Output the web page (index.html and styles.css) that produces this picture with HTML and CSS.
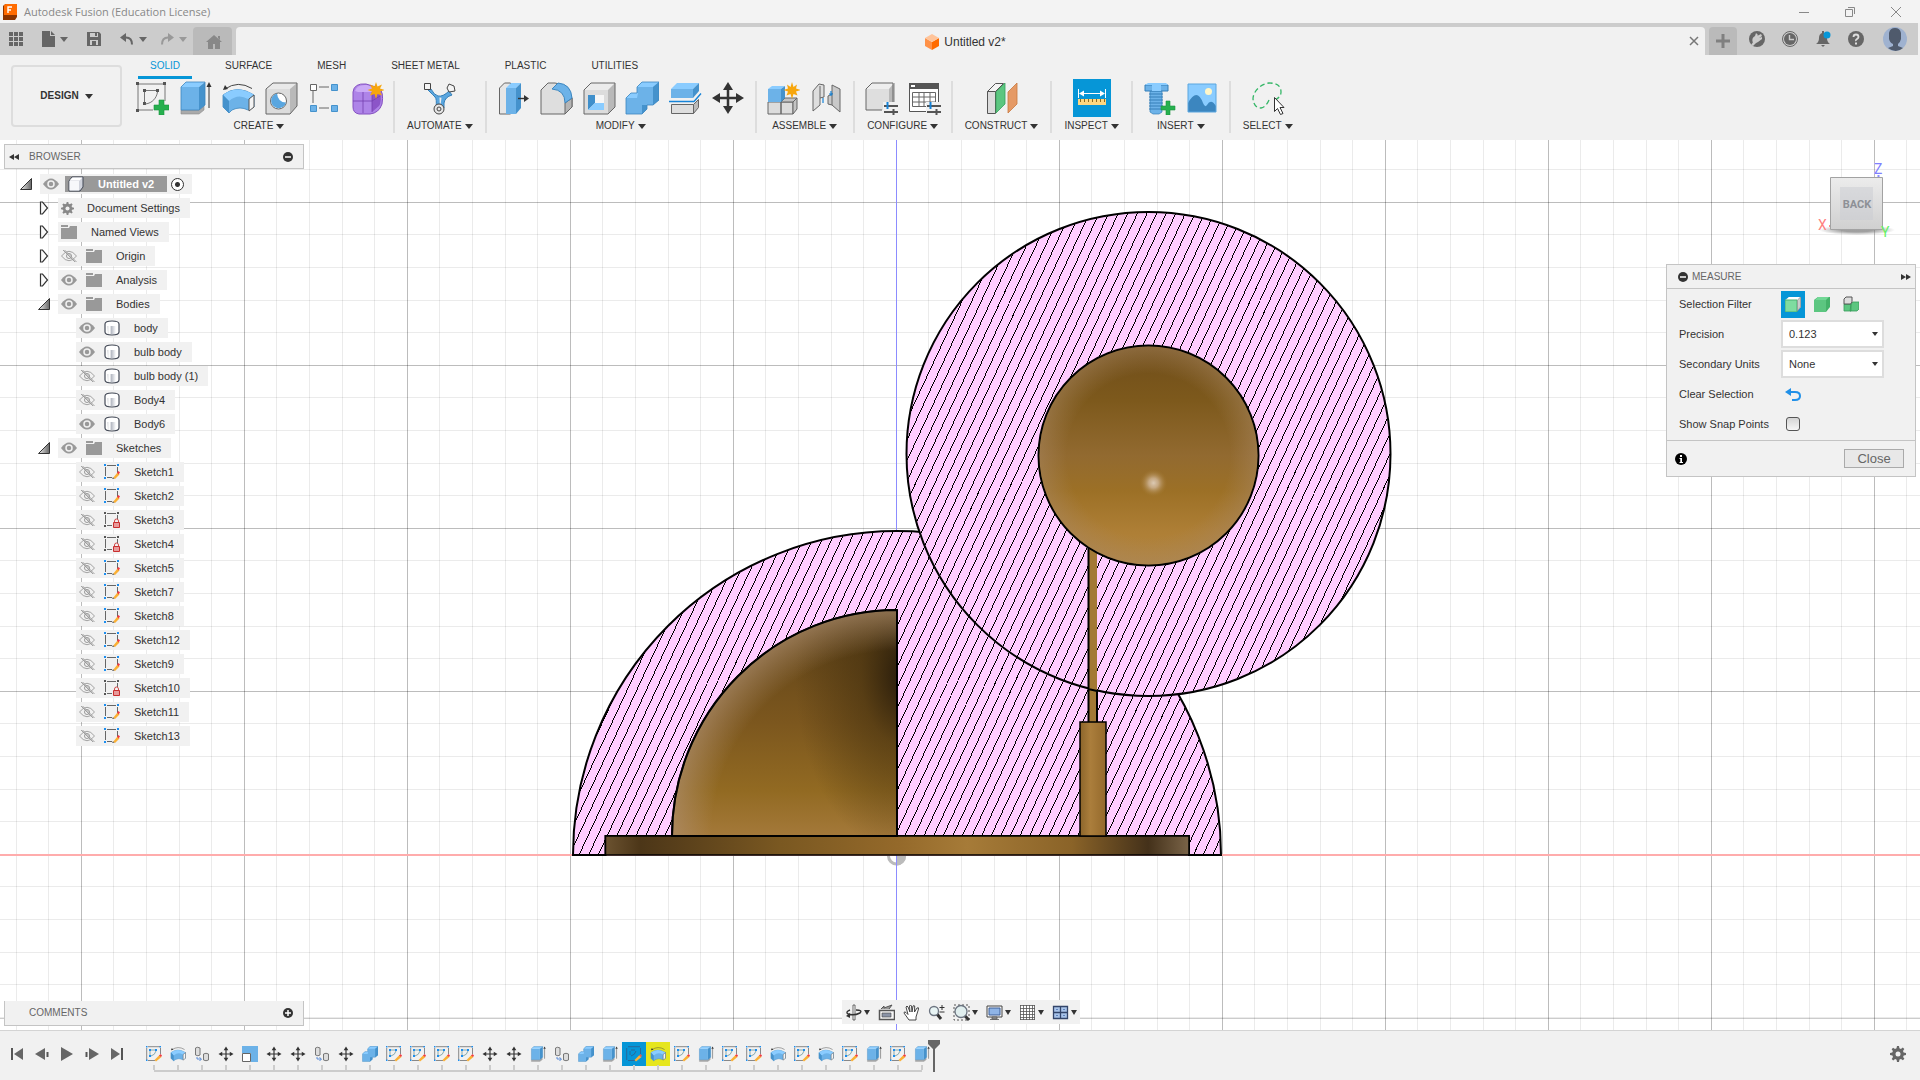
FILE: index.html
```html
<!DOCTYPE html>
<html lang="en">
<head>
<meta charset="utf-8">
<title>Autodesk Fusion (Education License)</title>
<link rel="stylesheet" href="styles.css">
</head>
<body>
<svg class="defs" width="0" height="0" aria-hidden="true">
  <defs>
    <linearGradient id="twistyFill" x1="0" y1="0" x2="1" y2="0"><stop offset="0" stop-color="#eee"/><stop offset="1" stop-color="#666"/></linearGradient>
    <linearGradient id="cylFill" x1="0" y1="0" x2="1" y2="0"><stop offset="0" stop-color="#d8dade"/><stop offset=".3" stop-color="#fff"/><stop offset=".5" stop-color="#b9bdc6"/><stop offset="1" stop-color="#fff"/></linearGradient>
  </defs>
  <symbol id="i-sketch" viewBox="0 0 34 34">
    <path d="M3 4v24M4 3h24M30 4v16M4 29h14" fill="none" stroke="#777"/>
    <path d="M1 1h3v3H1zM28 1h3v3h-3zM1 28h3v3H1zM8 8h3v3H8zM21 8h3v3h-3zM8 21h3v3H8z" fill="#555"/>
    <path d="M9.500 11v10M11 9.500h10M22.500 11c-1 6-5 11-12 12" fill="none" stroke="#777"/>
    <path d="M24 19h5v5h5v5h-5v5h-5v-5h-5v-5h5z" fill="#26b04e" stroke="#1c9440" stroke-width=".6"/>
  </symbol>
  <symbol id="i-extrude" viewBox="0 0 34 34">
    <path d="M3 29h18l5-4v4l-5 4H3z" fill="#aaa" stroke="#8a8a8a" stroke-width=".6"/>
    <path d="M3 6h18v23H3z" fill="#6cb2e8"/><path d="M3 6l5-5h19l-6 5z" fill="#8accff"/><path d="M21 6l6-5v23l-6 5z" fill="#4592cc"/>
    <path d="M3 6l5-5h19v23l-6 5H3z" fill="none" stroke="#3c86bf" stroke-width=".8"/>
    <path d="M31 5v22" stroke="#333"/><path d="M31 1l2.500 5h-5z" fill="#333"/>
  </symbol>
  <symbol id="i-revolve" viewBox="0 0 34 34">
    <path d="M2 14q14-11 31 0v12l-6 3q-8-4-16 0l-3 3-6-6z" fill="#6cb2e8" stroke="#3c86bf" stroke-width=".8"/>
    <path d="M2 14q14-11 31 0l-6 4q-10-6-19 2z" fill="#8accff"/><path d="M2 14l6 6v12l-6-6z" fill="#4592cc"/>
    <path d="M33 14v12l-5 4V18z" fill="#f4f4f4" stroke="#555"/>
    <path d="M4 8q13-9 27-.5" fill="none" stroke="#444"/><path d="M2 9l2-5 3 4z" fill="#333"/>
  </symbol>
  <symbol id="i-hole" viewBox="0 0 34 34">
    <path d="M2 8l7-6h24v23l-7 8H2z" fill="#b9b9b9"/><path d="M2 8l7-6h24l-7 6z" fill="#e9e9e9"/><path d="M2 8h24v25H2z" fill="#dcdcdc"/>
    <path d="M2 8l7-6h24v23l-7 8H2z" fill="none" stroke="#666"/>
    <circle cx="14.500" cy="20" r="8" fill="#fff" stroke="#666"/><path d="M13 12.500a7.500 7.500 0 1 0 9 9q-8 0-9-9z" fill="#5aa6df"/>
  </symbol>
  <symbol id="i-pattern" viewBox="0 0 34 34">
    <path d="M12 6h10M12 27h10M6 10v12" stroke="#666" fill="none"/>
    <path d="M3.500 3.500h6v6h-6z" fill="#fff" stroke="#666"/><path d="M24.500 3.500h6v6h-6zM24.500 24.500h6v6h-6zM3.500 24.500h6v6h-6z" fill="#6cb2e8" stroke="#4592cc"/>
  </symbol>
  <symbol id="i-form" viewBox="0 0 34 34">
    <path d="M3 11q1-9 13-8l13 4q5 4 3 16-3 9-12 10H9q-6-1-6-7z" fill="#ae84e8" stroke="#8450c0"/>
    <path d="M5 10q2-7 12-6l10 4-5 3H8z" fill="#cbaaf6"/><path d="M22 12l8-3q2 12-1 16l-7 6z" fill="#8c55c8"/>
    <path d="M13 11v21M3 20h19l8-5M22 11v20" fill="none" stroke="#7440ae" stroke-width=".8"/>
    <path d="M26 1l1.500 4.500L32 3.500l-2 4 5 1.500-5 1.500 2 4-4.500-1.500L26 18l-1.500-5L20 14.500l2-4L17.500 9l4.500-1.500-2-4 4.500 2z" fill="#f7a60c"/>
  </symbol>
  <symbol id="i-automate" viewBox="0 0 34 34">
    <path d="M8 8q3 6 7 7 5 1 11-5l3 4q-7 2-8 8v5l-8-1q1-8-1-10T5 9z" fill="#5aa6df" stroke="#357fb8"/>
    <path d="M16.500 16.500l2 .2-.8 6h-1z" fill="#eee"/>
    <path d="M1.500 2.500h6v6h-6z" fill="#f4f4f4" stroke="#444"/><path d="M26 3l5 2 1 5-6 1-2-4z" fill="#f4f4f4" stroke="#444"/>
    <circle cx="16" cy="28" r="5" fill="#e6e6e6" stroke="#444"/><circle cx="16" cy="28" r="2" fill="none" stroke="#444"/>
  </symbol>
  <symbol id="i-press" viewBox="0 0 34 34">
    <path d="M3.500 7l5-5h6v31h-11z" fill="#e6e6e6" stroke="#666"/>
    <path d="M10 7h10v26H10z" fill="#6cb2e8"/><path d="M10 7l5-5h10l-5 5z" fill="#8accff"/><path d="M20 7l5-5v25l-5 6z" fill="#4592cc"/>
    <path d="M22 17.500h8" stroke="#333" stroke-width="1.400"/><path d="M28 14l5 3.500-5 3.500z" fill="#333"/>
  </symbol>
  <symbol id="i-fillet" viewBox="0 0 34 34">
    <path d="M2 9l7-7h7q10 1 13 10l4 5v9l-7 7H2z" fill="#dedede" stroke="#666"/><path d="M26 22l7-5v9l-7 7z" fill="#b5b5b5" stroke="#666"/>
    <path d="M13 8l6-6q13 1 14 15l-7 5Q26 9 13 8z" fill="#6cb2e8" stroke="#3c86bf"/>
  </symbol>
  <symbol id="i-shell" viewBox="0 0 34 34">
    <path d="M2 9l7-7h24v24l-7 7H2z" fill="#b9b9b9"/><path d="M2 9l7-7h24l-7 7z" fill="#ececec"/><path d="M2 9h24v24H2z" fill="#dcdcdc"/>
    <path d="M2 9l7-7h24v24l-7 7H2z" fill="none" stroke="#666"/>
    <path d="M6 14h16v15H6z" fill="#f6f6f6"/><path d="M6 14h7v8l-7 7z" fill="#3f8fcb"/><path d="M6 29l7-7h9v7z" fill="#8accff"/>
  </symbol>
  <symbol id="i-combine" viewBox="0 0 34 34">
    <path d="M1 17l5-5h6V6l5-5h17v18l-6 5h-6v4l-5 5H1z" fill="#6cb2e8"/><path d="M12 6l5-5h17l-6 5zM1 17l5-5h7l-1 5z" fill="#8accff"/><path d="M28 6l6-5v18l-6 5zM17 24h5v4l-5 5z" fill="#4592cc"/>
    <path d="M1 17l5-5h6V6l5-5h17v18l-6 5h-6v4l-5 5H1z" fill="none" stroke="#3c86bf" stroke-width=".8"/>
  </symbol>
  <symbol id="i-split" viewBox="0 0 34 34">
    <path d="M3 8h22v9H3z" fill="#6cb2e8"/><path d="M3 8l6-6h22l-6 6z" fill="#8accff"/><path d="M25 8l6-6v8l-6 7z" fill="#4592cc"/>
    <path d="M3.500 23.500h22v9h-22z" fill="#dedede" stroke="#666"/><path d="M25.500 23.500l5-5v8l-5 6z" fill="#bbb" stroke="#666"/>
    <path d="M1 20.500h25l7-8" fill="none" stroke="#1583d8" stroke-width="1.400"/>
  </symbol>
  <symbol id="i-move" viewBox="0 0 34 34">
    <path d="M17 6v22M6 17h22" stroke="#333" stroke-width="2.500"/><path d="M17 1l5 8H12zM17 33l5-8H12zM1 17l8-5v10zM33 17l-8-5v10z" fill="#333"/>
  </symbol>
  <symbol id="i-component" viewBox="0 0 34 34">
    <path d="M2 21h13v12H2zM15 21h12v12H15z" fill="#dcdcdc" stroke="#666"/><path d="M15 21l4-4h12l-4 4zM27 21l4-4v11l-4 5z" fill="#c4c4c4" stroke="#666"/>
    <path d="M2 8h13v13H2z" fill="#6cb2e8"/><path d="M2 8l4-3h13l-4 3z" fill="#8accff"/><path d="M15 8l4-3v12l-4 4z" fill="#4592cc"/>
    <path d="M26 1l1.500 5L31 3.500l-1 4 5 1.500-5 1.500 1.500 4-4-1.500L26 18l-1.500-5-4 1.500 1.500-4L17.500 9l4.500-1.500-1-4 3.500 2.500z" fill="#f7a60c"/>
  </symbol>
  <symbol id="i-joint" viewBox="0 0 34 34">
    <path d="M4 10l6-7 5 1v12l-4 1v7l-7 6z" fill="#dedede" stroke="#666"/><path d="M11 5v12" stroke="#666"/>
    <path d="M31 8l-8-4v9l-4 2v8l4 1 8 7z" fill="#c9c9c9" stroke="#666"/><path d="M23 12v12" stroke="#666"/>
    <path d="M14 17v5M22 10v5M20 13h4" stroke="#1583d8" stroke-width="1.200"/>
  </symbol>
  <symbol id="i-config" viewBox="0 0 34 34">
    <path d="M2 8l6-6h23v20l-6 7H2z" fill="#b9b9b9"/><path d="M2 8l6-6h22l-5 6z" fill="#eee"/><path d="M2 8h23v21H2z" fill="#dedede"/>
    <path d="M18 29H2V8l6-6h21v20" fill="none" stroke="#666"/>
    <path d="M19 21h15v12H19z" fill="#f1f1f1"/><path d="M20 25h14M20 31h14" stroke="#555" stroke-width="2"/><path d="M23.500 21v7" stroke="#1583d8" stroke-width="2"/><path d="M29.500 28v6" stroke="#555" stroke-width="2"/>
  </symbol>
  <symbol id="i-table" viewBox="0 0 34 34">
    <path d="M2.500 2.500h29v28h-29z" fill="#fff" stroke="#555"/><path d="M2 2h30v6H2z" fill="#555"/><path d="M4 4h4v2H4z" fill="#fff"/>
    <path d="M5.500 11.500h23v14h-23zM5 16h24M5 21h24M12 11v15M17 11v15M23 11v15" fill="none" stroke="#666"/>
    <path d="M19 21h15v13H19z" fill="#f1f1f1"/><path d="M20 25h14M20 31h14" stroke="#555" stroke-width="2"/><path d="M23.500 21v7" stroke="#1583d8" stroke-width="2"/><path d="M29.500 28v6" stroke="#555" stroke-width="2"/>
  </symbol>
  <symbol id="i-construct" viewBox="0 0 34 34">
    <path d="M2.500 10.500l8-8h8l-8 8z" fill="#f4f4f4" stroke="#555"/><path d="M2.500 10.500h8v22h-8z" fill="#dcdcdc" stroke="#555"/>
    <path d="M11 11l9-9v21l-9 9z" fill="#5cc680" stroke="#36a25c" stroke-width=".8"/><path d="M23 11l9-9v21l-9 9z" fill="#e59a66" stroke="#c9783f" stroke-width=".8"/>
  </symbol>
  <symbol id="i-inspect" viewBox="0 0 34 34">
    <path d="M3.500 8v9M30.500 8v9M5 12.500h24" stroke="#fff" fill="none"/><path d="M4 12.500l5-3v6zM30 12.500l-5-3v6z" fill="#fff"/>
    <path d="M3 18h28v6H3z" fill="#ffd780"/><path d="M5.500 18v3M9.500 18v3M13.500 18v3M17.500 18v3M21.500 18v3M25.500 18v3M29.500 18v3" stroke="#8b6a20"/>
  </symbol>
  <symbol id="i-insert" viewBox="0 0 34 34">
    <path d="M8 10h12v21l-3 2h-6l-3-2z" fill="#6cb2e8" stroke="#357fb8" stroke-width=".7"/><path d="M7 13h14M7 16h14M7 19h14M7 22h14M7 25h14M7 28h14" stroke="#357fb8"/>
    <path d="M3 4h23v6H3z" fill="#6cb2e8" stroke="#357fb8"/><path d="M3 4l3-2h18l2 2z" fill="#8accff"/><path d="M10 4h9v6h-9z" fill="#8accff"/>
    <path d="M24 20h4v5h5v4h-5v5h-4v-5h-5v-4h5z" fill="#26b04e" stroke="#1c9440" stroke-width=".6"/>
  </symbol>
  <symbol id="i-image" viewBox="0 0 34 34">
    <path d="M3 3h28v28H3z" fill="#8accff"/><path d="M3 22q9-16 15 0 2 5 4 2 4-7 9 1v6H3z" fill="#3c86bf"/><circle cx="23.500" cy="10.500" r="3.500" fill="#fff6c8"/><path d="M3 3h28v28H3z" fill="none" stroke="#5aa6df"/>
  </symbol>
  <symbol id="i-select" viewBox="0 0 34 34">
    <path d="M24 19q6-3 6-8 0-9-12-9C9 3 2 11 2 18q1 9 8 9 5-1 8-8" fill="none" stroke="#33b666" stroke-width="1.300" stroke-dasharray="5 3"/>
    <path d="M23.500 16.500v14l3-3 3 6 2.500-1-3-6h4z" fill="#fff" stroke="#333"/>
  </symbol>

  <symbol id="i-eye" viewBox="0 0 16 12"><path d="M0 6q8-11 16 0-8 11-16 0z" fill="#999"/><circle cx="8" cy="6" r="3" fill="#999" stroke="#f1f1f1" stroke-width="1.500"/></symbol>
  <symbol id="i-eyeoff" viewBox="0 0 16 12"><path d="M.5 6q7.500-9.500 15 0-7.500 9.500-15 0zM2 0l12 12M3.500 0l12 12" fill="none" stroke="#999" stroke-width=".9"/><circle cx="8" cy="6" r="2.500" fill="none" stroke="#999"/></symbol>
  <symbol id="i-folder" viewBox="0 0 16 14"><path d="M0 0h7v2H0zM0 3h8l1-2h7v13H0z" fill="#999"/></symbol>
  <symbol id="i-body" viewBox="0 0 16 16"><path d="M1 4q0-3 7-3t7 3v8q0 3-7 3t-7-3z" fill="#fff" stroke="#434956" stroke-width="1.200"/><path d="M3 6h9v8H4z" fill="url(#cylFill)"/></symbol>
  <symbol id="i-cube" viewBox="0 0 16 16"><path d="M1 5l3-4h11v10l-3 4H1z" fill="#d0d3dc" stroke="#434956"/><path d="M1.500 5H11v9.500H1.500z" fill="#f7f8fb"/><path d="M1.500 4.500l3-3h10l-3 3z" fill="#fff"/></symbol>
  <symbol id="i-sk" viewBox="0 0 16 16"><path d="M3 1.500h9M1.500 3v9M13.500 3v6M3 13.500h5" fill="none" stroke="#666"/><path d="M0 0h2v2H0zM13 0h2v2h-2zM0 13h2v2H0z" fill="#1c8ef0"/><path d="M9 14l4.500-5.500 2 2L11 15z" fill="#fbb034"/><path d="M13 8.500L14.500 7l1.500 1.500-1.500 2z" fill="#f03c46"/><path d="M8 15l1-2 1.500 2z" fill="#777"/></symbol>
  <symbol id="i-sklock" viewBox="0 0 16 16"><path d="M3 1.500h9M1.500 3v9M13.500 3v4M3 13.500h5" fill="none" stroke="#666"/><path d="M0 0h2v2H0zM13 0h2v2h-2zM0 13h2v2H0z" fill="#555"/><path d="M10.500 10V9a2 2 0 0 1 4 0v1" fill="none" stroke="#d04848"/><path d="M9.500 10.500h6v5h-6z" fill="#e89a9a" stroke="#c92f2f"/></symbol>
  <symbol id="i-gear" viewBox="0 0 16 16"><path d="M7 0h2l.4 2.300 1.500.6L12.800 1.600l1.500 1.500-1.300 1.900.6 1.500L16 7v2l-2.300.4-.6 1.500 1.300 1.900-1.500 1.500-1.900-1.300-1.500.6L9 16H7l-.4-2.300-1.500-.6-1.900 1.300-1.500-1.500 1.300-1.900-.6-1.500L0 9V7l2.300-.4.6-1.500-1.300-1.900 1.500-1.500L5 2.900l1.500-.6z" fill="currentColor"/><circle cx="8" cy="8" r="2.500" fill="#f1f1f1"/></symbol>
  <symbol id="i-open" viewBox="0 0 12 12"><path d="M11.500.5v11H.5z" fill="url(#twistyFill)" stroke="#333"/></symbol>
  <symbol id="i-shut" viewBox="0 0 12 14"><path d="M2.500 1h2l5 6-5 6h-2z" fill="#fafafa" stroke="#333" stroke-width="1.200"/></symbol>

  <symbol id="t-sketch" viewBox="0 0 16 16"><path d="M2 .7h12M.7 2v12M14.500 2v6M2 14.500h7" fill="none" stroke="#888"/><path d="M0 0h1.500v1.500H0zM13.500 0H15v1.500h-1.500zM0 13.500h1.500V15H0zM3 3h2v2H3zM9 3h2v2H9zM3 9h2v2H3z" fill="#1c8ef0"/><path d="M5 4h4M4 5v4M10 5q-1 4-5 5" fill="none" stroke="#8aa"/><path d="M8.500 14l5-5 2 2L10 15.500z" fill="#fbb034"/><path d="M13 9.500L14.500 8 16 9.500 15 11z" fill="#f03c46"/></symbol>
  <symbol id="t-sketch-on" viewBox="0 0 16 16"><path d="M2 .7h12M.7 2v12M14.500 2v6M2 14.500h7M5 4h4M4 5v4M10 5q-1 4-5 5" fill="none" stroke="#28699a"/><path d="M8.500 14l5-5 2 2L10 15.500z" fill="#fbb034"/><path d="M13 9.500L14.500 8 16 9.500 15 11z" fill="#d5605a"/></symbol>
  <symbol id="t-copy" viewBox="0 0 16 16"><path d="M1.500 2q2-1.500 4.500 0v7q-2 1.500-4.500 0zM9.500 8q2.500-1.500 5 0v6q-2.500 1.500-5 0z" fill="#ddd" stroke="#777"/><path d="M3 11v2h4M5.500 11.500L7.500 13l-2 2" fill="none" stroke="#5a8cd8"/></symbol>
  <symbol id="t-scale" viewBox="0 0 16 16"><path d="M0 0h16v16H9V7H0z" fill="#6cb2e8"/><path d="M.5 7.500h8v8h-8z" fill="#fff" stroke="#666"/></symbol>
</svg>

<header class="titlebar">
  <svg class="logo" width="14" height="16" viewBox="0 0 14 16"><path d="M1 1l2-1h11v13l-2 3H0V2z" fill="#8a3400"/><path d="M1 1l2-1h11v11H1z" fill="#ff6b00"/><path d="M5 9V3h4M5 6h3" fill="none" stroke="#fff" stroke-width="1.400"/></svg>
  <span class="app-name">Autodesk Fusion (Education License)</span>
  <div class="window-controls">
    <button aria-label="Minimize"><svg width="12" height="12"><path d="M1 6.500h10" stroke="#888"/></svg></button>
    <button aria-label="Restore"><svg width="12" height="12"><path d="M1.500 3.500h7v7h-7zM4 1.500h6.500V8" fill="none" stroke="#888"/></svg></button>
    <button aria-label="Close window"><svg width="12" height="12"><path d="M1 1l10 10M11 1L1 11" stroke="#888"/></svg></button>
  </div>
</header>

<nav class="tabbar" aria-label="Documents">
  <div class="quick">
    <button class="q-grid" aria-label="Data panel"><svg width="14" height="14" viewBox="0 0 14 14"><path d="M0 0h4v4H0zM5 0h4v4H5zM10 0h4v4h-4zM0 5h4v4H0zM5 5h4v4H5zM10 5h4v4h-4zM0 10h4v4H0zM5 10h4v4H5zM10 10h4v4h-4z" fill="#666"/></svg></button>
    <button class="q-file" aria-label="File"><svg width="13" height="16" viewBox="0 0 13 16"><path d="M0 0h8v5h5v11H0z" fill="#666"/><path d="M9 0l4 4H9z" fill="#666"/></svg><i class="caret"></i></button>
    <button class="q-save" aria-label="Save"><svg width="14" height="14" viewBox="0 0 14 14"><path d="M0 0h12l2 2v12H0z" fill="#666"/><path d="M3 1h8v4H3zM3 8h8v5H3z" fill="#ccc"/><path d="M8 1h2v3H8zM5 9h4v4H5z" fill="#666"/></svg></button>
    <button class="q-undo" aria-label="Undo"><svg width="14" height="12" viewBox="0 0 14 12"><path d="M2 4.500h4q6 0 6 7" fill="none" stroke="#666" stroke-width="2"/><path d="M0 4.500L6 0v9z" fill="#666"/></svg><i class="caret"></i></button>
    <button class="q-redo" aria-label="Redo"><svg width="14" height="12" viewBox="0 0 14 12"><path d="M12 4.500H8q-6 0-6 7" fill="none" stroke="#999" stroke-width="2"/><path d="M14 4.500L8 0v9z" fill="#999"/></svg><i class="caret"></i></button>
  </div>
  <button class="home-tab" aria-label="Home"><svg width="16" height="14" viewBox="0 0 16 14"><path d="M0 7l8-7 8 7h-2v7H9V9H7v5H2V7zM12 1h2v4l-2-2z" fill="#888"/></svg></button>
  <div class="doc-tab">
    <span class="doc-label"><svg width="14" height="16" viewBox="0 0 14 16"><path d="M0 4l7 4v8l-7-4z" fill="#ff9248"/><path d="M14 4L7 8v8l7-4z" fill="#ff6b00"/><path d="M7 0l7 4-7 4-7-4z" fill="#ffc49a"/></svg>Untitled v2*</span>
    <button aria-label="Close document"><svg width="10" height="10"><path d="M1 1l8 8M9 1L1 9" stroke="#777" stroke-width="1.500"/></svg></button>
  </div>
  <button class="new-tab" aria-label="New design"><svg width="14" height="14"><path d="M7 0v14M0 7h14" stroke="#808080" stroke-width="3"/></svg></button>
  <div class="account">
    <button aria-label="Extensions"><svg width="16" height="16" viewBox="0 0 16 16"><circle cx="8" cy="8" r="8" fill="#666"/><path d="M4 12q-2-5 2-7l1-3 2 2-1 1 4-2 1 2-3 2 3-1v2l-4 3q-3 2-5 1" fill="#ccc"/><path d="M2 14l3-4 2 2-3 3z" fill="#ccc"/></svg></button>
    <button aria-label="Job status"><svg width="16" height="16" viewBox="0 0 16 16"><circle cx="8" cy="8" r="7.500" fill="none" stroke="#666"/><circle cx="8" cy="8" r="6" fill="#666"/><path d="M7.500 4v4.500H12" fill="none" stroke="#ccc" stroke-width="1.400"/></svg></button>
    <button aria-label="Notifications"><svg width="16" height="16" viewBox="0 0 16 16"><path d="M1 13q3-2 3-6 0-4 3-5V0h2v2q3 1 3 5 0 4 3 6zM6 14h4l-2 2z" fill="#666"/><circle cx="12" cy="4" r="3.500" fill="#0696d7"/></svg></button>
    <button aria-label="Help"><svg width="16" height="16" viewBox="0 0 16 16"><circle cx="8" cy="8" r="8" fill="#666"/><path d="M5.500 6q0-2.500 2.500-2.500T10.500 6Q10.500 7 9 8t-1 2" fill="none" stroke="#ddd" stroke-width="1.800"/><path d="M7 11.500h2v2H7z" fill="#ddd"/></svg></button>
    <button class="avatar" aria-label="Account"><svg width="24" height="24" viewBox="0 0 24 24"><circle cx="12" cy="12" r="12" fill="#9fb2d0"/><path d="M6 6q1-5 6-5t6 5v6q-1 4-3 5v2l5 2q-7 6-15 0l5-2v-2q-3-1-4-5z" fill="#4f5a6c"/></svg></button>
  </div>
</nav>

<section class="ribbon">
  <button class="workspace">DESIGN<i class="caret"></i></button>
  <div class="ribbon-main">
    <div class="tabs">
      <button class="active">SOLID</button><button>SURFACE</button><button>MESH</button><button>SHEET METAL</button><button>PLASTIC</button><button>UTILITIES</button>
    </div>
    <div class="groups">
      <div class="group"><div class="tools">
        <button aria-label="Create Sketch"><svg><use href="#i-sketch"/></svg></button><button aria-label="Extrude"><svg><use href="#i-extrude"/></svg></button><button aria-label="Revolve"><svg><use href="#i-revolve"/></svg></button><button aria-label="Hole"><svg><use href="#i-hole"/></svg></button><button aria-label="Pattern"><svg><use href="#i-pattern"/></svg></button><button aria-label="Create Form"><svg><use href="#i-form"/></svg></button>
      </div><button class="menu">CREATE<i class="caret"></i></button></div>
      <div class="group"><div class="tools"><button aria-label="Automated Modeling"><svg><use href="#i-automate"/></svg></button></div><button class="menu">AUTOMATE<i class="caret"></i></button></div>
      <div class="group"><div class="tools">
        <button aria-label="Press Pull"><svg><use href="#i-press"/></svg></button><button aria-label="Fillet"><svg><use href="#i-fillet"/></svg></button><button aria-label="Shell"><svg><use href="#i-shell"/></svg></button><button aria-label="Combine"><svg><use href="#i-combine"/></svg></button><button aria-label="Split Body"><svg><use href="#i-split"/></svg></button><button aria-label="Move"><svg><use href="#i-move"/></svg></button>
      </div><button class="menu">MODIFY<i class="caret"></i></button></div>
      <div class="group"><div class="tools"><button aria-label="New Component"><svg><use href="#i-component"/></svg></button><button aria-label="Joint"><svg><use href="#i-joint"/></svg></button></div><button class="menu">ASSEMBLE<i class="caret"></i></button></div>
      <div class="group"><div class="tools"><button aria-label="Configure"><svg><use href="#i-config"/></svg></button><button aria-label="Configuration Table"><svg><use href="#i-table"/></svg></button></div><button class="menu">CONFIGURE<i class="caret"></i></button></div>
      <div class="group"><div class="tools"><button aria-label="Offset Plane"><svg><use href="#i-construct"/></svg></button></div><button class="menu">CONSTRUCT<i class="caret"></i></button></div>
      <div class="group"><div class="tools"><button class="on" aria-label="Measure"><svg><use href="#i-inspect"/></svg></button></div><button class="menu">INSPECT<i class="caret"></i></button></div>
      <div class="group"><div class="tools"><button aria-label="Insert Fastener"><svg><use href="#i-insert"/></svg></button><button aria-label="Canvas"><svg><use href="#i-image"/></svg></button></div><button class="menu">INSERT<i class="caret"></i></button></div>
      <div class="group"><div class="tools"><button aria-label="Select"><svg><use href="#i-select"/></svg></button></div><button class="menu">SELECT<i class="caret"></i></button></div>
    </div>
  </div>
</section>

<main class="viewport">
  <svg class="scene" viewBox="0 140 1920 890" preserveAspectRatio="xMidYMid slice" role="img" aria-label="Section view of the lamp model">
    <defs>
      <clipPath id="domeClip"><path d="M573 855a324 324 0 0 1 648 0h-32v-19H605.500v19z"/></clipPath>
      <clipPath id="ballClip"><circle cx="1148.500" cy="454" r="242"/></clipPath>
      <path id="hatchLines" d="M-1500 0H1500" transform="translate(897 836) skewX(-25)" stroke="#000" stroke-width="1800" stroke-dasharray="1 8.600" shape-rendering="crispEdges"/>
      <linearGradient id="ballBase" x1="0" y1="0" x2="0" y2="1"><stop offset="0" stop-color="#6f4d1a"/><stop offset=".25" stop-color="#7d591c"/><stop offset=".5" stop-color="#926a30"/><stop offset=".66" stop-color="#9c7026"/><stop offset=".85" stop-color="#ae7f36"/><stop offset="1" stop-color="#b38640"/></linearGradient>
      <radialGradient id="ballEdge"><stop offset=".75" stop-color="#a88660" stop-opacity="0"/><stop offset="1" stop-color="#a88660" stop-opacity=".5"/></radialGradient>
      <radialGradient id="spark"><stop offset="0" stop-color="#dccab4"/><stop offset=".35" stop-color="#cdb292" stop-opacity=".85"/><stop offset="1" stop-color="#a0752c" stop-opacity="0"/></radialGradient>
      <linearGradient id="domeBase" x1="0" y1="0" x2="0" y2="1"><stop offset="0" stop-color="#5c4118"/><stop offset=".5" stop-color="#7c571e"/><stop offset=".8" stop-color="#926a22"/><stop offset="1" stop-color="#a4793a"/></linearGradient>
      <radialGradient id="domeDark" gradientUnits="userSpaceOnUse" cx="0" cy="0" r="1" gradientTransform="translate(905 675) scale(110 180)"><stop offset="0" stop-color="#2a1c0a"/><stop offset=".12" stop-color="#2e200c" stop-opacity=".9"/><stop offset=".4" stop-color="#3c2a0c" stop-opacity=".5"/><stop offset="1" stop-color="#3c2a0c" stop-opacity="0"/></radialGradient>
      <radialGradient id="domeEdge" gradientUnits="userSpaceOnUse" cx="897" cy="836" r="226"><stop offset=".82" stop-color="#b09070" stop-opacity="0"/><stop offset="1" stop-color="#b09070" stop-opacity=".65"/></radialGradient>
      <linearGradient id="plate"><stop offset="0" stop-color="#6b5230"/><stop offset=".06" stop-color="#4c3618"/><stop offset=".3" stop-color="#7a5821"/><stop offset=".5" stop-color="#94692a"/><stop offset=".62" stop-color="#a67b38"/><stop offset=".8" stop-color="#8a6328"/><stop offset=".93" stop-color="#44311a"/><stop offset="1" stop-color="#7a6448"/></linearGradient>
      <linearGradient id="rod"><stop offset="0" stop-color="#8c652b"/><stop offset=".4" stop-color="#ab7e3c"/><stop offset="1" stop-color="#94692c"/></linearGradient>
    </defs>
    <g stroke="#000" shape-rendering="crispEdges">
      <path d="M-49.600 585H2000" stroke-opacity=".08" stroke-width="1200" stroke-dasharray="1 31.600"/>
      <path d="M960 6.200V1200" stroke-opacity=".08" stroke-width="2400" stroke-dasharray="1 31.600"/>
      <path d="M-82 585H2100" stroke-opacity=".2" stroke-width="1200" stroke-dasharray="1 162"/>
      <path d="M960 38.500V1200" stroke-opacity=".2" stroke-width="2400" stroke-dasharray="1 162.200"/>
    </g>
    <circle cx="896.500" cy="856" r="8" fill="#fff" stroke="#bbb" stroke-width="3"/><path d="M896.500 856h9.500a9.500 9.500 0 0 1-9.500 9.500z" fill="#bbb"/>
    <path d="M-500 855H2500" stroke="#ffacac" stroke-width="2"/>
    <path d="M896.500 0V1400" stroke="#8c8cff"/>
    <g stroke="#000" stroke-width="2">
      <path d="M573 855a324 324 0 0 1 648 0h-32v-19H605.500v19z" fill="#fcf" stroke="none"/>
      <g clip-path="url(#domeClip)"><use href="#hatchLines"/></g>
      <path d="M573 855a324 324 0 0 1 648 0h-32v-19H605.500v19z" fill="none"/>
      <path d="M605.500 836H1189v19H605.500z" fill="url(#plate)" stroke-width="1.500"/>
      <path d="M672 836a225 226 0 0 1 225-226v226z" fill="url(#domeBase)"/>
      <path d="M672 836a225 226 0 0 1 225-226v226z" fill="url(#domeDark)" stroke="none"/>
      <path d="M672 836a225 226 0 0 1 225-226v226z" fill="url(#domeEdge)"/>
      <circle cx="1148.500" cy="454" r="242" fill="#fcf" stroke="none"/>
      <g clip-path="url(#ballClip)"><use href="#hatchLines"/></g>
      <circle cx="1148.500" cy="454" r="242" fill="none"/>
      <path d="M1088 545h9v177h-9z" fill="#a37935" stroke="none"/>
      <path d="M1088.500 547v175M1097 690v32M1088 689q5 1 9 2"/>
      <path d="M1080 722h26v114h-26z" fill="url(#rod)" stroke-width="1.500"/>
      <circle cx="1148.500" cy="455.500" r="110" fill="url(#ballBase)"/>
      <circle cx="1148.500" cy="455.500" r="109" fill="url(#ballEdge)" stroke="none"/>
      <circle cx="1153.500" cy="483" r="14" fill="url(#spark)" stroke="none"/>
    </g>
  </svg>

  <section class="browser" aria-label="Browser">
    <header class="panel-head"><svg class="rewind" width="10" height="6"><path d="M5 0v6L0 3zM10 0v6L5 3z" fill="#333"/></svg><span>BROWSER</span><button aria-label="Collapse"><svg width="10" height="10"><circle cx="5" cy="5" r="5" fill="#333"/><path d="M2 5h6" stroke="#fff" stroke-width="1.500"/></svg></button></header>
    <ul class="tree">
      <li class="l0"><svg class="tw"><use href="#i-open"/></svg><div class="pill root"><svg class="eye"><use href="#i-eye"/></svg><span class="sel"><svg><use href="#i-cube"/></svg>Untitled v2</span><input type="radio" name="active" aria-label="Active component" checked></div></li>
      <li class="l1"><svg class="tw"><use href="#i-shut"/></svg><div class="pill one gear"><svg class="ic"><use href="#i-gear"/></svg><span>Document Settings</span></div></li>
      <li class="l1"><svg class="tw"><use href="#i-shut"/></svg><div class="pill one"><svg class="ic"><use href="#i-folder"/></svg><span>Named Views</span></div></li>
      <li class="l1"><svg class="tw"><use href="#i-shut"/></svg><div class="pill"><svg class="eye"><use href="#i-eyeoff"/></svg><svg class="ic"><use href="#i-folder"/></svg><span>Origin</span></div></li>
      <li class="l1"><svg class="tw"><use href="#i-shut"/></svg><div class="pill"><svg class="eye"><use href="#i-eye"/></svg><svg class="ic"><use href="#i-folder"/></svg><span>Analysis</span></div></li>
      <li class="l1"><svg class="tw"><use href="#i-open"/></svg><div class="pill"><svg class="eye"><use href="#i-eye"/></svg><svg class="ic"><use href="#i-folder"/></svg><span>Bodies</span></div></li>
      <li class="l2"><div class="pill"><svg class="eye"><use href="#i-eye"/></svg><svg class="ic"><use href="#i-body"/></svg><span>body</span></div></li>
      <li class="l2"><div class="pill"><svg class="eye"><use href="#i-eye"/></svg><svg class="ic"><use href="#i-body"/></svg><span>bulb body</span></div></li>
      <li class="l2"><div class="pill"><svg class="eye"><use href="#i-eyeoff"/></svg><svg class="ic"><use href="#i-body"/></svg><span>bulb body (1)</span></div></li>
      <li class="l2"><div class="pill"><svg class="eye"><use href="#i-eyeoff"/></svg><svg class="ic"><use href="#i-body"/></svg><span>Body4</span></div></li>
      <li class="l2"><div class="pill"><svg class="eye"><use href="#i-eye"/></svg><svg class="ic"><use href="#i-body"/></svg><span>Body6</span></div></li>
      <li class="l1"><svg class="tw"><use href="#i-open"/></svg><div class="pill"><svg class="eye"><use href="#i-eye"/></svg><svg class="ic"><use href="#i-folder"/></svg><span>Sketches</span></div></li>
      <li class="l2"><div class="pill"><svg class="eye"><use href="#i-eyeoff"/></svg><svg class="ic"><use href="#i-sk"/></svg><span>Sketch1</span></div></li>
      <li class="l2"><div class="pill"><svg class="eye"><use href="#i-eyeoff"/></svg><svg class="ic"><use href="#i-sk"/></svg><span>Sketch2</span></div></li>
      <li class="l2"><div class="pill"><svg class="eye"><use href="#i-eyeoff"/></svg><svg class="ic"><use href="#i-sklock"/></svg><span>Sketch3</span></div></li>
      <li class="l2"><div class="pill"><svg class="eye"><use href="#i-eyeoff"/></svg><svg class="ic"><use href="#i-sklock"/></svg><span>Sketch4</span></div></li>
      <li class="l2"><div class="pill"><svg class="eye"><use href="#i-eyeoff"/></svg><svg class="ic"><use href="#i-sk"/></svg><span>Sketch5</span></div></li>
      <li class="l2"><div class="pill"><svg class="eye"><use href="#i-eyeoff"/></svg><svg class="ic"><use href="#i-sk"/></svg><span>Sketch7</span></div></li>
      <li class="l2"><div class="pill"><svg class="eye"><use href="#i-eyeoff"/></svg><svg class="ic"><use href="#i-sk"/></svg><span>Sketch8</span></div></li>
      <li class="l2"><div class="pill"><svg class="eye"><use href="#i-eyeoff"/></svg><svg class="ic"><use href="#i-sk"/></svg><span>Sketch12</span></div></li>
      <li class="l2"><div class="pill"><svg class="eye"><use href="#i-eyeoff"/></svg><svg class="ic"><use href="#i-sk"/></svg><span>Sketch9</span></div></li>
      <li class="l2"><div class="pill"><svg class="eye"><use href="#i-eyeoff"/></svg><svg class="ic"><use href="#i-sklock"/></svg><span>Sketch10</span></div></li>
      <li class="l2"><div class="pill"><svg class="eye"><use href="#i-eyeoff"/></svg><svg class="ic"><use href="#i-sk"/></svg><span>Sketch11</span></div></li>
      <li class="l2"><div class="pill"><svg class="eye"><use href="#i-eyeoff"/></svg><svg class="ic"><use href="#i-sk"/></svg><span>Sketch13</span></div></li>
    </ul>
  </section>

  <section class="comments panel-head"><span>COMMENTS</span><button aria-label="Expand comments"><svg width="10" height="10"><circle cx="5" cy="5" r="5" fill="#333"/><path d="M2 5h6M5 2v6" stroke="#fff" stroke-width="1.500"/></svg></button></section>

  <svg class="viewcube" width="84" height="84" viewBox="1812 160 84 84" role="img" aria-label="View cube, back">
    <defs><linearGradient id="cubeFace" x1="0" y1="0" x2="0" y2="1"><stop offset="0" stop-color="#ececec"/><stop offset="1" stop-color="#d0d0d0"/></linearGradient><radialGradient id="cubeShadow"><stop offset=".4" stop-color="#777" stop-opacity=".7"/><stop offset="1" stop-color="#777" stop-opacity="0"/></radialGradient></defs>
    <ellipse cx="1857" cy="230" rx="38" ry="5" fill="url(#cubeShadow)"/>
    <path d="M1878.500 175v2" stroke="#8c8cff" stroke-width="2"/><path d="M1829 226h2" stroke="#ff8c8c" stroke-width="2"/>
    <path d="M1830.500 177.500h52v52h-52z" fill="url(#cubeFace)" stroke="#a2a2a2"/><path d="M1840 187h33v33h-33z" fill="#c9ccd2" opacity=".5"/>
    <text class="cube-face" x="1857" y="208" text-anchor="middle">BACK</text>
    <text class="cube-axis" x="1874" y="174" fill="#8080ff">Z</text><text class="cube-axis" x="1818" y="230" fill="#ff8080">X</text><text class="cube-axis" x="1881" y="237" fill="#66f266">Y</text>
  </svg>

  <form class="measure">
    <header><svg width="10" height="10"><circle cx="5" cy="5" r="5" fill="#333"/><path d="M2 5h6" stroke="#fff" stroke-width="1.500"/></svg><h2>MEASURE</h2><svg width="10" height="6"><path d="M0 0v6l5-3zM5 0v6l5-3z" fill="#333"/></svg></header>
    <div class="fields">
      <span>Selection Filter</span>
      <div class="filters">
        <button type="button" class="on" aria-label="Select face"><svg width="16" height="16" viewBox="0 0 16 16"><path d="M0 4l4-3h12v10l-4 4" fill="#d8d8d8"/><path d="M1 4l3-3h11l-2 3z" fill="#fff"/><path d="M0 4h12v12H0z" fill="#7fdca0" stroke="#48b070"/><path d="M12.500 4L15.500 1v10l-3 4z" fill="#ccc" stroke="#888" stroke-width=".6"/></svg></button>
        <button type="button" aria-label="Select body"><svg width="16" height="16" viewBox="0 0 16 16"><path d="M0 4l4-3h12v10l-4 5H0z" fill="#44b269"/><path d="M0 4h12v12H0z" fill="#5cc680"/><path d="M1 4l3-3h11l-3 3z" fill="#72d896"/></svg></button>
        <button type="button" aria-label="Select component"><svg width="16" height="16" viewBox="0 0 16 16"><path d="M1 8h7v7H1zM8 8l2-2h6v7l-2 2H7z" fill="#5cc680" stroke="#379d5b" stroke-width=".8"/><path d="M1 3l2-2h6v5L7.500 8H1z" fill="#ddd" stroke="#555"/></svg></button>
      </div>
      <label for="precision">Precision</label><div class="pick"><select id="precision"><option>0.123</option></select></div>
      <label for="units">Secondary Units</label><div class="pick"><select id="units"><option>None</option></select></div>
      <label for="clear">Clear Selection</label><button type="button" id="clear" class="clear" aria-label="Clear Selection"><svg width="16" height="13" viewBox="0 0 16 13"><path d="M4 4h6q5 0 5 4t-5 4H7" fill="none" stroke="#2090e8" stroke-width="2"/><path d="M0 4l6-4v8z" fill="#2090e8"/></svg></button>
      <label for="snap">Show Snap Points</label><input type="checkbox" id="snap">
    </div>
    <footer><svg width="12" height="12" viewBox="0 0 12 12"><circle cx="6" cy="6" r="6" fill="#000"/><path d="M5 2h2v2H5zM4.500 5H7v4h1v1H4.500V9h.8V6h-.8z" fill="#fff"/></svg><button type="button">Close</button></footer>
  </form>

  <div class="navbar" role="toolbar" aria-label="Navigation">
    <button aria-label="Orbit"><svg width="17" height="17" viewBox="0 0 17 17"><path d="M8 1h2v15H8z" fill="#fff" stroke="#444" stroke-width=".8"/><path d="M5 6Q0 8 3 10q6 2 12-1 3-3-4-3" fill="none" stroke="#333" stroke-width="1.400"/><path d="M1 12l4-3v5z" fill="#333"/></svg><i class="caret"></i></button>
    <button aria-label="Look At"><svg width="17" height="17" viewBox="0 0 17 17"><path d="M1.500 6.500h15v9h-15z" fill="#f6f6f6" stroke="#555" stroke-width="1.500"/><path d="M4 9h9v4H4z" fill="#8a93a6" stroke="#444" stroke-width=".6"/><path d="M3 5l3-3v2l8-3-3 4" fill="#999" stroke="#555"/></svg></button>
    <button aria-label="Pan"><svg width="17" height="17" viewBox="0 0 17 17"><path d="M6 16L1 9q0-2 2-.5l2 2L3 3q1-2 2 0l2 5-.5-6q1-2 2 0L9 8l1-6q1-1 1.700 0L11.500 8 14 4q2-1 1.500 1L13 13v3z" fill="#fff" stroke="#333" stroke-width=".9"/></svg></button>
    <button aria-label="Zoom"><svg width="17" height="17" viewBox="0 0 17 17"><path d="M9 10l4 5" stroke="#333" stroke-width="3"/><circle cx="6" cy="7" r="4.500" fill="#e8f4f4" stroke="#6c7480" stroke-width="1.300"/><path d="M14 1v5M11.500 3.500h5M11.500 8h5" stroke="#333"/></svg></button>
    <button aria-label="Fit"><svg width="17" height="17" viewBox="0 0 17 17"><path d="M1 1h15v15H1z" fill="none" stroke="#555" stroke-dasharray="2 2"/><path d="M12 12l4 4" stroke="#333" stroke-width="3"/><circle cx="8" cy="7.500" r="6" fill="#e0eeee" stroke="#6c7480" stroke-width="1.300"/></svg><i class="caret"></i></button>
    <button aria-label="Display Settings"><svg width="17" height="17" viewBox="0 0 17 17"><path d="M1 2h15v11H1z" fill="#f4f4f4" stroke="#444"/><path d="M3 4h11v7H3z" fill="#8fb4e6" stroke="#3c5f98"/><path d="M6 13h5v2H6zM4 15.500h9" fill="#999" stroke="#555" stroke-width=".8"/></svg><i class="caret"></i></button>
    <button aria-label="Grid and Snaps"><svg width="17" height="17" viewBox="0 0 17 17"><path d="M1 1h15v15H1z" fill="#fff"/><path d="M1 1.500h15M1 4.500h15M1 7.500h15M1 10.500h15M1 13.500h15M1 15.500h15M1.500 1v15M4.500 1v15M7.500 1v15M10.500 1v15M13.500 1v15M15.500 1v15" stroke="#555" stroke-width=".8"/></svg><i class="caret"></i></button>
    <button aria-label="Viewports"><svg width="17" height="17" viewBox="0 0 17 17"><path d="M1.500 2.500h7v6h-7zM8.500 2.500h7v6h-7zM1.500 8.500h7v6h-7zM8.500 8.500h7v6h-7z" fill="#a9c4ea" stroke="#33456a" stroke-width="1.300"/><path d="M4 5h2v1H4zM11 5h2v1h-2zM4 11h2v1H4zM11 11h2v1h-2z" fill="#5f83bc"/></svg><i class="caret"></i></button>
  </div>
</main>

<footer class="timeline">
  <div class="playback">
    <button aria-label="To start"><svg width="12" height="12"><path d="M1 0v12" stroke="#555" stroke-width="2"/><path d="M12 0v12L3 6z" fill="#666"/></svg></button>
    <button aria-label="Step back"><svg width="14" height="12"><path d="M10 0v12L0 6z" fill="#666"/><path d="M12.500 4v5" stroke="#555" stroke-width="2"/></svg></button>
    <button aria-label="Play"><svg width="12" height="14"><path d="M0 0v14l12-7z" fill="#666"/></svg></button>
    <button aria-label="Step forward"><svg width="14" height="12"><path d="M4 0v12l10-6z" fill="#666"/><path d="M1.500 4v5" stroke="#555" stroke-width="2"/></svg></button>
    <button aria-label="To end"><svg width="12" height="12"><path d="M11 0v12" stroke="#555" stroke-width="2"/><path d="M0 0v12l9-6z" fill="#666"/></svg></button>
  </div>
  <ol class="steps">
    <li><svg><use href="#t-sketch"/></svg></li><li><svg><use href="#i-revolve"/></svg></li><li><svg><use href="#t-copy"/></svg></li><li><svg><use href="#i-move"/></svg></li><li><svg><use href="#t-scale"/></svg></li><li><svg><use href="#i-move"/></svg></li><li><svg><use href="#i-move"/></svg></li><li><svg><use href="#t-copy"/></svg></li><li><svg><use href="#i-move"/></svg></li><li><svg><use href="#i-combine"/></svg></li><li><svg><use href="#t-sketch"/></svg></li><li><svg><use href="#t-sketch"/></svg></li><li><svg><use href="#t-sketch"/></svg></li><li><svg><use href="#t-sketch"/></svg></li><li><svg><use href="#i-move"/></svg></li><li><svg><use href="#i-move"/></svg></li><li><svg><use href="#i-extrude"/></svg></li><li><svg><use href="#t-copy"/></svg></li><li><svg><use href="#i-combine"/></svg></li><li><svg><use href="#i-extrude"/></svg></li><li class="current"><svg><use href="#t-sketch-on"/></svg></li><li class="warn"><svg><use href="#i-revolve"/></svg></li><li><svg><use href="#t-sketch"/></svg></li><li><svg><use href="#i-extrude"/></svg></li><li><svg><use href="#t-sketch"/></svg></li><li><svg><use href="#t-sketch"/></svg></li><li><svg><use href="#i-revolve"/></svg></li><li><svg><use href="#t-sketch"/></svg></li><li><svg><use href="#i-revolve"/></svg></li><li><svg><use href="#t-sketch"/></svg></li><li><svg><use href="#i-extrude"/></svg></li><li><svg><use href="#t-sketch"/></svg></li><li><svg><use href="#i-extrude"/></svg></li>
  </ol>
  <svg class="marker" width="12" height="32"><path d="M0 0h12v4L7 9v23H5V9L0 4z" fill="#666"/></svg>
  <button class="settings" aria-label="Timeline settings"><svg width="16" height="16"><use href="#i-gear"/></svg></button>
</footer>
</body>
</html>
```
FILE: styles.css
```css
* { box-sizing: border-box; }
html, body { height: 100%; }
body {
  margin: 0;
  display: flex;
  flex-direction: column;
  overflow: hidden;
  background: #f1f1f1;
  color: #333;
  font: 11px/16px "Liberation Sans", Arial, sans-serif;
}
svg { display: block; flex: none; }
.defs { position: absolute; }
button {
  display: flex;
  align-items: center;
  justify-content: center;
  padding: 0;
  border: 0;
  background: none;
  color: inherit;
  font: inherit;
}
.caret {
  border: 4px solid transparent;
  border-top: 5px solid currentColor;
  border-bottom: 0;
}

/* Title bar */
.titlebar {
  display: flex;
  align-items: center;
  height: 23px;
  padding: 0 12px 0 3px;
  background: #f3f3f3;
  color: #888;
  font: 11px/16px "Open Sans", "Noto Sans", sans-serif;
}
.app-name { margin-left: 7px; }
.window-controls { display: flex; gap: 22px; margin-left: auto; }
.window-controls button { width: 24px; height: 20px; }

/* Document tab bar */
.tabbar {
  display: flex;
  align-items: flex-end;
  height: 32px;
  margin-right: 2px;
  padding-top: 4px;
  background: #ccc;
}
.quick { display: flex; width: 193px; height: 28px; padding-left: 9px; color: #666; }
.quick button { height: 24px; gap: 5px; justify-content: flex-start; }
.q-grid { width: 33px; }
.q-file { width: 45px; }
.q-save { width: 33px; }
.q-undo { width: 40px; }
.q-redo { color: #999; }
.home-tab { width: 39px; height: 28px; padding: 2px 0 0 2px; border-radius: 4px 4px 0 0; background: #bababa; }
.doc-tab {
  display: flex;
  flex: 1;
  align-items: center;
  height: 28px;
  margin: 0 4px;
  padding: 0 6px 0 6px;
  border-radius: 4px 4px 0 0;
  background: #f1f1f1;
  font-size: 12px;
}
.doc-label { display: flex; flex: 1; align-items: center; justify-content: center; gap: 5px; padding-top: 2px; }
.new-tab { width: 28px; height: 28px; border-radius: 4px 4px 0 0; background: #bababa; }
.account { display: flex; align-items: center; gap: 17px; padding: 0 11px 4px 12px; height: 28px; }
.account .avatar { margin-left: 2px; }

/* Ribbon */
.ribbon { display: flex; height: 85px; font-size: 10px; }
.workspace {
  gap: 6px;
  width: 111px;
  height: 62px;
  margin: 10px 3px 0 11px;
  border: 2px solid #ddd;
  border-radius: 4px;
  font-weight: bold;
}
.tabs { display: flex; gap: 21px; height: 24px; padding-left: 13px; }
.tabs button { height: 24px; padding: 0 12px; border-bottom: 3px solid transparent; }
.tabs .active { border-color: #0696d7; color: #0696d7; }
.groups { display: flex; padding-top: 2px; }
.group { position: relative; display: flex; flex-direction: column; align-items: center; height: 52px; padding: 0 5px; border-right: 2px solid #ddd; }
.group:last-child { border-right: 0; }
.tools { display: flex; height: 34px; }
.tools button { width: 43px; height: 34px; }
.tools svg { width: 34px; height: 34px; }
.tools .on { align-self: center; width: 38px; height: 38px; margin: 0 3px; background: #0696d7; }
.menu { gap: 3px; height: 18px; padding: 4px 7px 0; }

/* Viewport */
.viewport { position: relative; flex: 1; min-height: 0; background: #fff; border-bottom: 1px solid #d4d4d4; }
.scene { position: absolute; inset: 0; width: 100%; height: 100%; }
.panel-head {
  display: flex;
  align-items: center;
  width: 300px;
  height: 25px;
  padding: 0 10px 0 4px;
  border: 1px solid #c4c4c4;
  background: #f1f1f1;
  color: #666;
  font-size: 10px;
}
.panel-head span { margin-left: 10px; }
.panel-head button { margin-left: auto; }
.browser { position: absolute; left: 4px; top: 4px; }
.comments { position: absolute; left: 4px; bottom: 4px; border-top: 0; }
.comments span { margin-left: 20px; }
.tree { display: flex; flex-direction: column; gap: 4px; margin: 5px 0 0; padding: 0; list-style: none; }
.tree li { display: flex; align-items: center; height: 20px; }
.l0 { padding-left: 16px; }
.l1 { padding-left: 34px; }
.l2 { padding-left: 72px; }
.tw { width: 12px; height: 14px; margin-right: 8px; }
.pill { display: flex; align-items: center; height: 20px; padding: 0 10px 0 3px; background: #f1f1f1; }
.eye { width: 16px; height: 12px; margin-right: 9px; }
.ic { width: 16px; height: 16px; margin-right: 14px; }
.gear .ic { width: 13px; height: 13px; margin-right: 13px; color: #888; }
.root { padding-right: 8px; }
.root .eye { margin-right: 6px; }
.sel { display: flex; align-items: center; gap: 14px; height: 16px; padding: 0 13px 0 3px; margin-right: 4px; background: #999; color: #fff; font-weight: bold; }
.sel svg { width: 16px; height: 16px; }
.root input { appearance: none; width: 13px; height: 13px; margin: 0; border: 1px solid #333; border-radius: 50%; background: radial-gradient(circle, #333 2px, #fff 3px); }

/* View cube */
.viewcube { position: absolute; right: 24px; top: 20px; }
.cube-face { fill: #8d9096; font: bold 11px Roboto, sans-serif; }
.cube-axis { font: 14px Roboto, sans-serif; }

/* Measure dialog */
.measure { position: absolute; right: 4px; top: 124px; width: 250px; border: 1px solid #c4c4c4; background: #f1f1f1; }
.measure header { display: flex; align-items: center; height: 24px; padding: 0 4px 0 11px; border-bottom: 1px solid #c4c4c4; }
.measure h2 { flex: 1; margin: 0 0 0 4px; color: #666; font-size: 10px; font-weight: normal; }
.fields { display: grid; grid-template-columns: 102px 103px; grid-auto-rows: 30px; align-items: center; padding: 0 12px 1px; }
.filters { display: flex; gap: 5px; }
.filters button { width: 24px; height: 27px; }
.filters .on { background: #0696d7; }
.pick { position: relative; }
.pick::after { content: ""; position: absolute; right: 6px; top: 12px; border: 3px solid transparent; border-top: 4px solid #333; border-bottom: 0; }
.pick select { appearance: none; display: block; width: 103px; height: 28px; padding: 0 6px; border: 2px solid #ddd; background: #fff; color: #333; font: inherit; }
.clear { width: 24px; height: 20px; }
.fields input { appearance: none; width: 14px; height: 14px; margin: 0 0 0 5px; border: 1px solid #555; border-radius: 3px; background: linear-gradient(#d4d4d4, #f6f6f6); }
.measure footer { display: flex; align-items: center; justify-content: space-between; height: 36px; padding: 0 11px 0 8px; border-top: 1px solid #c4c4c4; }
.measure footer button { width: 60px; height: 19px; border: 1px solid #aaa; background: #e8e8e8; color: #666; font-size: 13px; }

/* Navigation bar */
.navbar { position: absolute; left: 50%; bottom: 6px; display: flex; align-items: center; gap: 8px; height: 24px; margin-left: -118px; padding: 0 3px; background: #f1f1f1; }
.navbar button { gap: 2px; }
.navbar .caret { border-width: 5px 3px 0; }

/* Timeline */
.timeline { display: flex; align-items: flex-start; height: 49px; padding: 9px 14px 0 10px; }
.playback { display: flex; gap: 11px; height: 28px; align-items: center; }
.playback button { width: 14px; height: 28px; }
.steps { display: flex; margin: 2px 0 0 18px; padding: 0; list-style: none; }
.steps li { position: relative; width: 24px; height: 30px; padding: 4px; border-bottom: 2px solid #ccc; }
.steps li:first-child { border-image: linear-gradient(to right, transparent 50%, #ccc 50%) 1; }
.steps li:last-child { border-image: linear-gradient(to right, #ccc 50%, transparent 50%) 1; }
.steps li::after { content: ""; position: absolute; left: 11px; bottom: 0; width: 2px; height: 5px; background: #ccc; }
.steps svg { width: 16px; height: 16px; }
.steps .current { background: linear-gradient(#0696d7 24px, transparent 24px); }
.steps .warn { background: linear-gradient(#e6e61e 24px, transparent 24px); }
.marker { margin-left: -6px; }
.settings { align-self: flex-start; width: 16px; height: 28px; margin-left: auto; color: #666; }
```
